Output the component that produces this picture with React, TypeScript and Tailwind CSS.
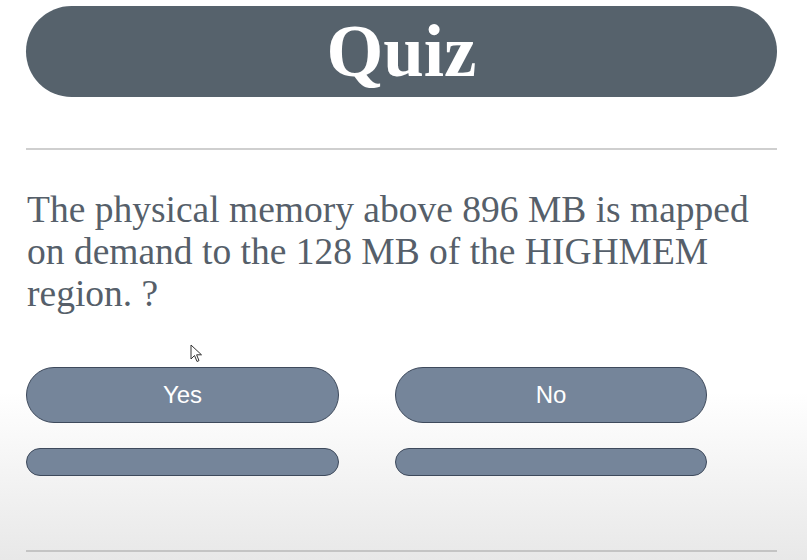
export default function App() {
  const serif = { fontFamily: '"Liberation Serif", "Times New Roman", serif' }
  const sans = { fontFamily: '"Liberation Sans", Arial, sans-serif' }

  return (
    <div className="relative w-[807px] h-[560px] overflow-hidden bg-gradient-to-b from-white via-white via-70% to-[#e8e8e8]">
      <div className="ml-[26px] w-[751px] pt-[6px]">
        {/* Header */}
        <div className="h-[91px] rounded-full bg-[#56626c] flex items-center justify-center">
          <h1 className="text-[73px] leading-none font-bold text-white" style={serif}>
            Quiz
          </h1>
        </div>

        <div className="mt-[51px] h-[2px] bg-[#cfcfcf]" />

        {/* Question */}
        <p className="mt-[39px] pl-[1px] text-[37.5px] leading-[42px] text-[#565f6a]" style={serif}>
          The physical memory above 896 MB is mapped on demand to the 128 MB of the HIGHMEM region. ?
        </p>

        {/* Answers */}
        <div className="mt-[52px] flex gap-[56px]">
          <button className="w-[313px] h-[56px] rounded-full bg-[#75859a] border border-[#3e4a5c] text-white text-[24px]" style={sans}>
            Yes
          </button>
          <button className="w-[312px] h-[56px] rounded-full bg-[#75859a] border border-[#3e4a5c] text-white text-[24px]" style={sans}>
            No
          </button>
        </div>
        <div className="mt-[25px] flex gap-[56px]">
          <button className="w-[313px] h-[28px] rounded-full bg-[#75859a] border border-[#3e4a5c]" />
          <button className="w-[312px] h-[28px] rounded-full bg-[#75859a] border border-[#3e4a5c]" />
        </div>

        <div className="mt-[74px] h-[2px] bg-[#c4c4c4]" />
      </div>

      {/* Mouse cursor */}
      <svg className="absolute left-[190px] top-[344px]" width="14" height="20" viewBox="0 0 14 20">
        <path d="M1 1 L1 15 L4.5 11.5 L7 17.5 L9 16.6 L6.6 10.8 L11.5 10.8 Z" fill="white" stroke="#333" strokeWidth="1" strokeLinejoin="round" />
      </svg>
    </div>
  )
}
